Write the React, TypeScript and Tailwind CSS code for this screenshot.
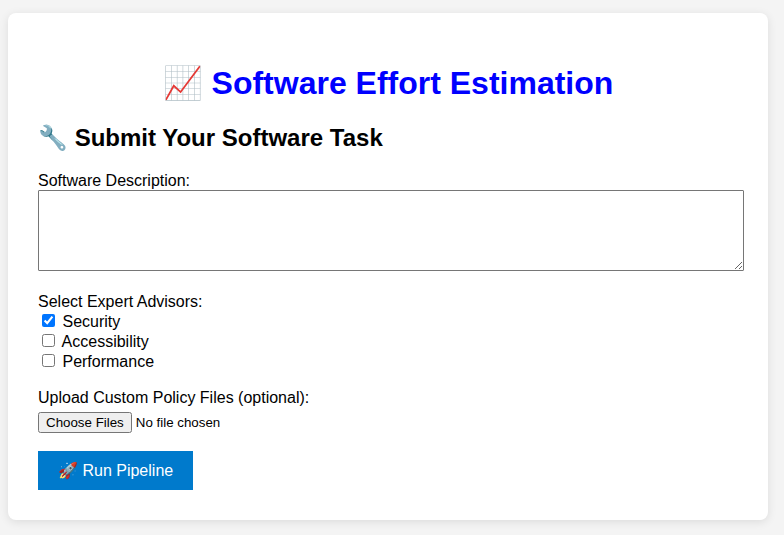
import { useState } from "react";

const advisors = ["Security", "Accessibility", "Performance"];

export default function App() {
  const [selected, setSelected] = useState<string[]>(["Security"]);

  const toggle = (name: string) =>
    setSelected((current) =>
      current.includes(name) ? current.filter((item) => item !== name) : [...current, name],
    );

  return (
    <div className="min-h-screen bg-[#f4f4f4] py-[13px] pr-4 pl-2 font-['Liberation_Sans',Arial,sans-serif] text-base leading-[18px] text-black">
      <main className="rounded-lg bg-white p-[30px] shadow-[0_2px_10px_rgba(0,0,0,0.1)]">
        <h1 className="mt-[22px] text-center text-[32px] leading-[37px] font-bold text-[#0000ff]">
          📈 Software Effort Estimation
        </h1>
        <h2 className="mt-[22px] text-2xl leading-7 font-bold">🔧 Submit Your Software Task</h2>
        <form className="mt-5" onSubmit={(event) => event.preventDefault()}>
          <label htmlFor="description" className="block">
            Software Description:
          </label>
          <textarea
            id="description"
            rows={5}
            className="block box-content h-[75px] w-full resize rounded-[1px] border border-[#767676] bg-white p-[2px] font-mono text-[13px] leading-[15px]"
          />

          <fieldset className="mt-[22px]">
            <legend>Select Expert Advisors:</legend>
            {advisors.map((name) => (
              <label key={name} className="block">
                <input
                  type="checkbox"
                  className="mt-[3px] mr-[3px] mb-[3px] ml-1 size-[13px] align-baseline"
                  checked={selected.includes(name)}
                  onChange={() => toggle(name)}
                />{" "}
                {name}
              </label>
            ))}
          </fieldset>

          <label htmlFor="policies" className="mt-[18px] block">
            Upload Custom Policy Files (optional):
          </label>
          <input
            id="policies"
            type="file"
            multiple
            className="mt-[5px] block [font:revert] file:[all:revert]"
          />

          <button type="submit" className="mt-[18px] block bg-[#007acc] px-5 py-[10px] leading-[19px] text-white">
            🚀 Run Pipeline
          </button>
        </form>
      </main>
    </div>
  );
}
